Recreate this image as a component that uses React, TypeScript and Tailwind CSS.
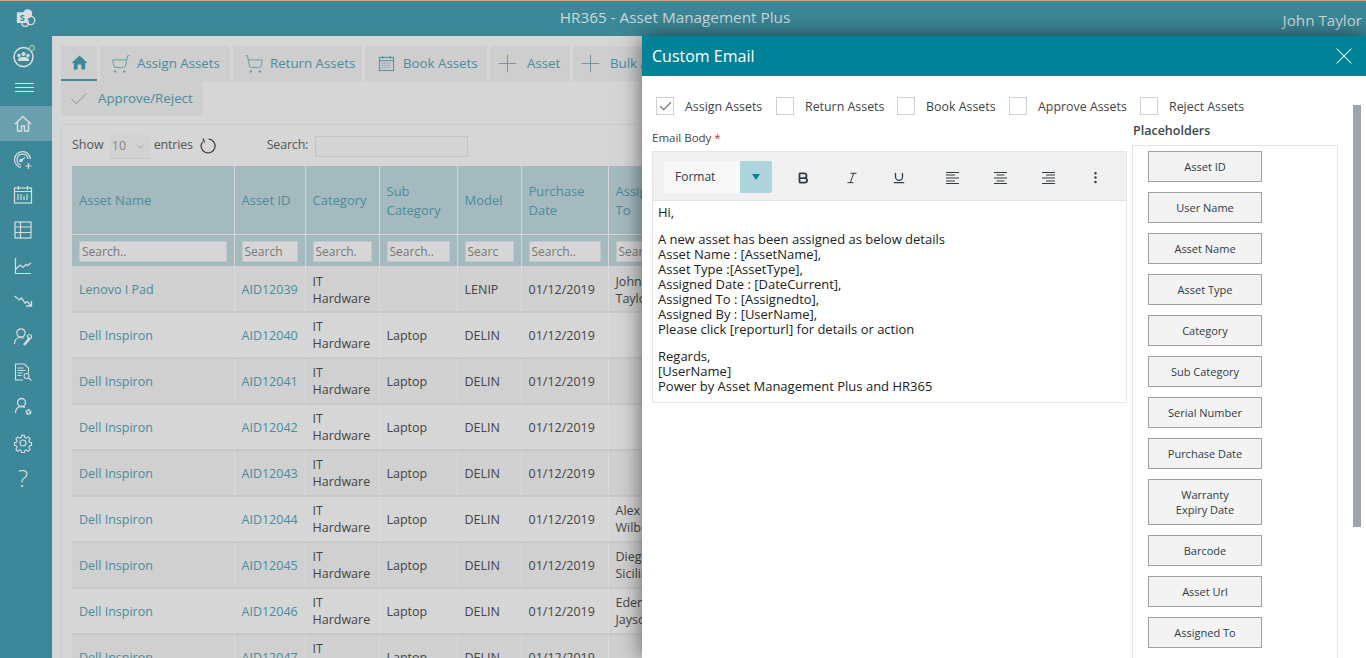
import { Bold, Check, ChevronDown, Italic, MoreVertical, Plus, ShoppingCart, Underline, X } from "lucide-react";

const sidebarIcons = [
  <svg key="home" viewBox="0 0 20 20" className="w-5 h-5" fill="none" stroke="currentColor" strokeWidth="1.4"><path d="M2 10 10 2.500 18 10M4.500 8.500V17h4v-5h3v5h4V8.500" /></svg>,
  <svg key="gauge" viewBox="0 0 20 20" className="w-5 h-5" fill="none" stroke="currentColor" strokeWidth="1.2"><path d="M8 17.500A8 8 0 1 1 17.500 9" /><path d="M8 15a5.500 5.500 0 1 1 7-6" /><path d="m8 10.500 4-3" /><circle cx="8" cy="10.500" r="1.200" fill="currentColor" /><path d="M15.500 13v6M12.500 16h6" /></svg>,
  <svg key="cal" viewBox="0 0 20 20" className="w-5 h-5" fill="none" stroke="currentColor" strokeWidth="1.2"><rect x="1.500" y="3" width="17" height="15" /><path d="M1.500 6.500h17M5.500 1v4M14.500 1v4M5 9v6M8 9v6M11 11v4M14 9v6" /></svg>,
  <svg key="grid" viewBox="0 0 20 20" className="w-5 h-5" fill="none" stroke="currentColor" strokeWidth="1.2"><rect x="2" y="2" width="16" height="16" /><path d="M2 7h16M2 12.500h16M7.500 2v16" /></svg>,
  <svg key="up" viewBox="0 0 20 20" className="w-5 h-5" fill="none" stroke="currentColor" strokeWidth="1.2"><path d="M2.500 2v15.500H18" /><path d="m3 13 4-4 3 2.500 3-3 1.500 1L18 7" /></svg>,
  <svg key="down" viewBox="0 0 20 20" className="w-5 h-5" fill="none" stroke="currentColor" strokeWidth="1.3"><path d="m1.500 5 5 4 2-2 3.500 5 2-1.500 4 4M13 15h5.500V10" /></svg>,
  <svg key="usermic" viewBox="0 0 20 20" className="w-5 h-5" fill="none" stroke="currentColor" strokeWidth="1.2"><circle cx="8" cy="6" r="4.200" /><path d="M1.500 17c0-4 2.500-6.500 6-6.500 1 0 2 .2 3 .7" /><path d="m11 18 6-7" strokeWidth="2.500" /><circle cx="16.500" cy="9.500" r="2" /></svg>,
  <svg key="report" viewBox="0 0 20 20" className="w-5 h-5" fill="none" stroke="currentColor" strokeWidth="1.1"><path d="M10 18H2.500V2h9l4 4v5" /><path d="M4.500 6h6M4.500 8.500h8M4.500 11h5M4.500 13.500h4" /><circle cx="13.500" cy="14" r="2.500" /><path d="m15.500 16 3 2.500" /></svg>,
  <svg key="usergear" viewBox="0 0 20 20" className="w-5 h-5" fill="none" stroke="currentColor" strokeWidth="1.3"><circle cx="8.500" cy="5.500" r="4" /><path d="M2.500 16c0-4 2.500-6.500 6-6.500 1.500 0 2.500.4 3.500 1" /><circle cx="15.500" cy="15" r="2" strokeWidth="2" strokeDasharray="2 .6" /></svg>,
  <svg key="gear" viewBox="0 0 20 20" className="w-5 h-5" fill="none" stroke="currentColor" strokeWidth="1.200"><path d="M8.500 1.500h3l.5 2.500 1.600.7 2.200-1.400 2.100 2.100-1.400 2.200.7 1.600 2.300.5v3l-2.300.5-.7 1.600 1.400 2.200-2.100 2.100-2.200-1.400-1.600.7-.5 2.300h-3l-.5-2.300-1.600-.7-2.200 1.400-2.100-2.100 1.400-2.200-.7-1.600-2.300-.5v-3l2.300-.5.7-1.600-1.400-2.200 2.100-2.100 2.200 1.400 1.600-.7z" transform="translate(1 1) scale(.9)" /><circle cx="10" cy="10" r="3" /></svg>,
];

const rows = [
  { name: "Lenovo I Pad", id: "AID12039", sub: "", model: "LENIP", to: ["John", "Taylor"] },
  { name: "Dell Inspiron", id: "AID12040", sub: "Laptop", model: "DELIN", to: [] },
  { name: "Dell Inspiron", id: "AID12041", sub: "Laptop", model: "DELIN", to: [] },
  { name: "Dell Inspiron", id: "AID12042", sub: "Laptop", model: "DELIN", to: [] },
  { name: "Dell Inspiron", id: "AID12043", sub: "Laptop", model: "DELIN", to: [] },
  { name: "Dell Inspiron", id: "AID12044", sub: "Laptop", model: "DELIN", to: ["Alex", "Wilber"] },
  { name: "Dell Inspiron", id: "AID12045", sub: "Laptop", model: "DELIN", to: ["Diego", "Siciliani"] },
  { name: "Dell Inspiron", id: "AID12046", sub: "Laptop", model: "DELIN", to: ["Eden", "Jayson"] },
  { name: "Dell Inspiron", id: "AID12047", sub: "Laptop", model: "DELIN", to: [] },
];

const columns = [
  { label: "Asset Name", search: "Search..", width: "w-[162px]" },
  { label: "Asset ID", search: "Search", width: "w-[71px]" },
  { label: "Category", search: "Search.", width: "w-[74px]" },
  { label: "Sub Category", search: "Search..", width: "w-[78px]" },
  { label: "Model", search: "Searc", width: "w-[64px]" },
  { label: "Purchase Date", search: "Search..", width: "w-[87px]" },
  { label: "Assigned To", search: "Search..", width: "w-[62px]" },
];

const placeholders = ["Asset ID", "User Name", "Asset Name", "Asset Type", "Category", "Sub Category", "Serial Number", "Purchase Date", "Warranty Expiry Date", "Barcode", "Asset Url", "Assigned To"];

const emailTypes = [
  { label: "Assign Assets", checked: true, width: "w-[120px]" },
  { label: "Return Assets", checked: false, width: "w-[121px]" },
  { label: "Book Assets", checked: false, width: "w-[112px]" },
  { label: "Approve Assets", checked: false, width: "w-[131px]" },
  { label: "Reject Assets", checked: false, width: "w-[110px]" },
];

const Tab = ({ icon, label, className }: { icon: React.ReactNode; label: string; className: string }) => (
  <div className={`${className} h-[35px] bg-[#cecece] flex items-center text-[13.300px] text-[#4a8c9c] overflow-hidden`}>
    {icon}
    <span className="whitespace-nowrap">{label}</span>
  </div>
);

const CalendarIcon = () => (
  <svg viewBox="0 0 18 18" className="w-[17px] h-[17px] text-[#4a8c9c]" fill="none" stroke="currentColor" strokeWidth="1">
    <rect x="1.500" y="2.500" width="15" height="14" />
    <path d="M1.500 6h15M5 1v3M13 1v3" />
    <path d="M4 8.500h10M4 11h10M4 13.500h10" strokeDasharray="1 1" />
  </svg>
);

const AlignIcon = ({ align }: { align: "left" | "center" | "right" }) => {
  const short = align === "left" ? "M1 4h9M1 10h9" : align === "center" ? "M3.500 4h8M3.500 10h8" : "M5 4h9M5 10h9";
  return (
    <svg viewBox="0 0 15 14" className="w-[15px] h-[14px]" fill="none" stroke="#2f3b47" strokeWidth="1.100">
      <path d="M1 1.500h13M1 7h13M1 12.500h13" />
      <path d={short} />
    </svg>
  );
};

const App = () => {
  return (
    <div className="relative w-[1366px] h-[658px] overflow-hidden bg-[#3c8898] font-['Open_Sans','Noto_Sans',sans-serif]">
      <div className="h-px bg-[#cfa87c]" />
      {/* top bar */}
      <div className="relative h-[35px] flex items-center justify-center pr-[16px] pb-[2px] text-[#cfd8da] text-[15.300px]">
        <span>HR365 - Asset Management Plus</span>
        <span className="absolute right-[4px] top-[8px] text-[15.200px]">John Taylor</span>
      </div>
      <div className="flex h-[622px]">
        <aside className="w-[52px] shrink-0 flex flex-col items-center text-[#d8dedf]">
          <svg viewBox="0 0 24 24" className="absolute top-[8px] left-[16px] w-[20px] h-[20px]" fill="#d8dedf">
            <circle cx="14" cy="7" r="5.500" />
            <circle cx="17.500" cy="15" r="5" fill="none" stroke="#d8dedf" strokeWidth="1.500" />
            <circle cx="11" cy="18" r="4" fill="none" stroke="#d8dedf" strokeWidth="1.500" />
            <rect x="1" y="5" width="13" height="13" rx="1" />
            <text x="7.500" y="15.500" fontSize="11" fontWeight="700" textAnchor="middle" fill="#3c8898">S</text>
          </svg>
          <div className="h-[40px] w-full pr-[5px] flex items-center justify-center">
            <svg viewBox="0 0 24 24" className="w-[24px] h-[24px]" fill="none" stroke="currentColor">
              <circle cx="11.500" cy="13" r="9.500" strokeWidth="1.500" />
              <circle cx="11.500" cy="10" r="2" fill="currentColor" stroke="none" />
              <circle cx="7" cy="11.500" r="1.700" fill="currentColor" stroke="none" />
              <circle cx="16" cy="11.500" r="1.700" fill="currentColor" stroke="none" />
              <path d="M6 17c0-3 1-4 5.500-4s5.500 1 5.500 4z" fill="currentColor" stroke="none" />
              <circle cx="20" cy="4" r="2.500" fill="#3c8898" stroke="#8fc59a" strokeWidth="1.300" />
            </svg>
          </div>
          <div className="h-[19px] w-[19px] mt-[2px] mr-[4px] flex flex-col justify-center gap-[3px]">
            <div className="h-px bg-current" />
            <div className="h-px bg-current" />
            <div className="h-px bg-current" />
          </div>
          <div className="h-[35px] w-full mt-[9px] mb-px pr-[6px] bg-[#6aa0ae] flex items-center justify-center">
            {sidebarIcons[0]}
          </div>
          {sidebarIcons.slice(1).map((icon, i) => (
            <div key={i} className="h-[35.400px] w-full pr-[6px] flex items-center justify-center shrink-0">
              {icon}
            </div>
          ))}
          <div className="h-[35px] w-full pr-[6px] flex items-center justify-center text-[24px] font-light leading-none">?</div>
        </aside>

        <main className="flex-1 bg-[#d6d6d6] pl-[9px] pt-[10px] overflow-hidden">
          <div className="flex flex-wrap w-[650px] gap-x-[3px]">
            <div className="w-[36px] h-[35px] bg-[#cecece] border-b-2 border-[#3c8898] flex items-center justify-center text-[#3c8898]">
              <svg viewBox="0 0 18 18" className="w-[17px] h-[17px]" fill="currentColor"><path d="M9 1.500 0.500 9.500H3V16.500H7V11H11V16.500H15V9.500H17.500z" /></svg>
            </div>
            <Tab className="w-[130px] pl-[11px] gap-[6px]" label="Assign Assets" icon={<ShoppingCart size={20} strokeWidth={0.900} className="-scale-x-100 shrink-0" />} />
            <Tab className="w-[129px] pl-[11px] gap-[6px]" label="Return Assets" icon={<ShoppingCart size={20} strokeWidth={0.900} className="shrink-0" />} />
            <Tab className="w-[122px] pl-[13px] gap-[8px]" label="Book Assets" icon={<CalendarIcon />} />
            <Tab className="w-[80px] pl-[3px] gap-[5px]" label="Asset" icon={<Plus size={29} strokeWidth={0.700} className="text-[#6b8a93] shrink-0" />} />
            <Tab className="w-[100px] pl-[3px] gap-[5px]" label="Bulk Assets" icon={<Plus size={29} strokeWidth={0.700} className="text-[#6b8a93] shrink-0" />} />
            <Tab className="w-[142px] pl-[7px] gap-[8px]" label="Approve/Reject" icon={<Check size={22} strokeWidth={0.900} className="text-[#6b8a93] shrink-0" />} />
          </div>
          <div className="mt-[8px] border border-[#cdcdcd] pl-[10px] pt-[11px] h-[600px] overflow-hidden">
            <div className="h-[30px] flex items-start text-[12.500px] text-[#555]">
              <span>Show</span>
              <div className="ml-[5px] -mt-[1px] w-[41px] h-[24px] bg-[#d2d2d2] border-b border-[#c6c6c6] flex items-center justify-between px-[3px] text-[#888]">
                <span>10</span>
                <ChevronDown size={13} strokeWidth={1} />
              </div>
              <span className="ml-[4px] tracking-[-0.2px]">entries</span>
              <svg viewBox="0 0 18 18" className="ml-[6px] mt-[1px] w-[18px] h-[18px] text-[#333]" fill="none" stroke="currentColor" strokeWidth="1.100">
                <path d="M9.500 2a7 7 0 1 1-6 2.800" />
                <path d="M4 1.500 5.500 5.500" />
              </svg>
              <span className="ml-[50px] tracking-[-0.2px]">Search:</span>
              <div className="ml-[7px] w-[153px] h-[21px] bg-[#d4d4d4] border border-[#c4c4c4]" />
            </div>
            <table className="table-fixed w-[598px] border-collapse text-[12.500px]">
              <thead>
                <tr className="bg-[#a5babf] text-[#4a8c9c] text-[13px] leading-[19px] h-[68px]">
                  {columns.map((c) => (
                    <th key={c.label} className={`${c.width} font-normal text-left px-[7px] pt-[2px] border border-[#d6d6d6] border-t-0 border-l-0`}>{c.label}</th>
                  ))}
                </tr>
                <tr className="bg-[#a5babf] h-[32px]">
                  {columns.map((c) => (
                    <th key={c.label} className="font-normal text-left px-[7px] pt-[2px] border-r border-[#d6d6d6]">
                      <div className="h-[21px] bg-[#d6d6d6] border border-[#c2c8c9] text-[12px] leading-[19px] text-[#777] pl-[2px] overflow-hidden whitespace-nowrap">{c.search}</div>
                    </th>
                  ))}
                </tr>
              </thead>
              <tbody>
                {rows.map((r, i) => (
                  <tr key={r.id} className={`h-[46px] leading-[17px] ${i === 0 ? "[&>td]:pt-[2px]" : ""} ${i % 2 === 0 ? "bg-[#d0d0d0]" : "bg-[#d6d6d6]"} border-b-2 border-[#c8c8c8]`}>
                    <td className="px-[7px] text-[#4a8c9c] border-r border-[#dadada]">{r.name}</td>
                    <td className="px-[7px] text-[#4a8c9c] border-r border-[#dadada]">{r.id}</td>
                    <td className="px-[7px] text-[#444] border-r border-[#dadada]">IT Hardware</td>
                    <td className="px-[7px] text-[#444] border-r border-[#dadada]">{r.sub}</td>
                    <td className="px-[7px] text-[#444] border-r border-[#dadada]">{r.model}</td>
                    <td className="px-[7px] text-[#444] border-r border-[#dadada] whitespace-nowrap">01/12/2019</td>
                    <td className="px-[7px] text-[#444]">{r.to.join(" ")}</td>
                  </tr>
                ))}
              </tbody>
            </table>
          </div>
        </main>
      </div>

      {/* custom email panel */}
      <section className="absolute left-[642px] top-[36px] right-0 bottom-0 bg-white shadow-[0_0_22px_rgba(0,0,0,0.55)] overflow-hidden">
        <div className="h-[40px] bg-[#008299] flex items-center justify-between pl-[10px] pr-[8px] text-white text-[16px]">
          <span className="pb-px">Custom Email</span>
          <X size={28} strokeWidth={0.900} />
        </div>
        <div className="pl-[14px] pt-[21px] flex">
          {emailTypes.map((t) => (
            <div key={t.label} className={`${t.width} h-[20px] flex items-start gap-[11px] text-[12.400px] leading-[20px] text-[#444]`}>
              <div className="w-[18px] h-[18px] border border-[#cfcfcf] flex items-center justify-center shrink-0">
                {t.checked && <Check size={15} strokeWidth={2} className="text-[#777]" />}
              </div>
              <span className="whitespace-nowrap">{t.label}</span>
            </div>
          ))}
        </div>
        <div className="flex pl-[10px]">
          <div className="w-[475px] shrink-0 pt-[13px]">
            <div className="h-[21px] text-[11.500px] leading-[16px] text-[#444]">Email Body <span className="text-[#c33]">*</span></div>
            <div className="border border-[#e4e4e4] h-[252px]">
              <div className="h-[49px] pt-[1px] bg-[#f0f0f0] border-b border-[#e0e0e0] flex items-center pl-[11px] text-[#2f3b47]">
                <div className="w-[108px] h-[32px] bg-[#f8f8f8] flex items-center justify-between rounded-[2px] overflow-hidden text-[12px]">
                  <span className="pl-[11px]">Format</span>
                  <div className="w-[32px] h-full bg-[#aed4de] flex items-center justify-center">
                    <div className="w-0 h-0 border-x-[4px] border-x-transparent border-t-[6px] border-t-[#007f99]" />
                  </div>
                </div>
                <Bold size={14} strokeWidth={3} className="ml-[24px] mt-[2px]" />
                <Italic size={14} strokeWidth={1.700} className="ml-[35px] mt-[2px]" />
                <Underline size={14} strokeWidth={2.200} className="ml-[33px] mt-[2px]" />
                <div className="ml-[39px] mt-[2px]"><AlignIcon align="left" /></div>
                <div className="ml-[33px] mt-[2px]"><AlignIcon align="center" /></div>
                <div className="ml-[33px] mt-[2px]"><AlignIcon align="right" /></div>
                <MoreVertical size={15} strokeWidth={2} className="ml-[32px] mt-[2px]" />
              </div>
              <div className="px-[5px] pt-[4px] text-[13px] leading-[15px] text-[#222]">
                <p>Hi,</p>
                <p className="mt-[12px]">A new asset has been assigned as below details</p>
                <p>Asset Name : [AssetName],</p>
                <p>Asset Type :[AssetType],</p>
                <p>Assigned Date : [DateCurrent],</p>
                <p>Assigned To : [Assignedto],</p>
                <p>Assigned By : [UserName],</p>
                <p>Please click [reporturl] for details or action</p>
                <p className="mt-[12px]">Regards,</p>
                <p>[UserName]</p>
                <p>Power by Asset Management Plus and HR365</p>
              </div>
            </div>
          </div>
          <div className="ml-[5px] w-[206px] shrink-0">
            <div className="h-[28px] pt-[5px] text-[12.500px] font-semibold leading-[18px] text-[#3a4750] pl-[1px]">Placeholders</div>
            <div className="border border-[#e6e6e6] pl-[15px] pt-[5px] flex flex-col gap-[10px] h-[600px]">
              {placeholders.map((p) => (
                <div key={p} className={`w-[114px] shrink-0 ${p.startsWith("Warranty") ? "h-[46px]" : "h-[31px]"} bg-[#f3f3f3] border border-[#a0a0a0] flex items-center justify-center text-center text-[11px] leading-[15px] text-[#2f3b47] px-[17px]`}>{p}</div>
              ))}
            </div>
          </div>
        </div>
        <div className="absolute left-[711px] top-[69px] w-[8px] h-[422px] bg-[#9aa5ad]" />
      </section>
    </div>
  );
};

export default App;
